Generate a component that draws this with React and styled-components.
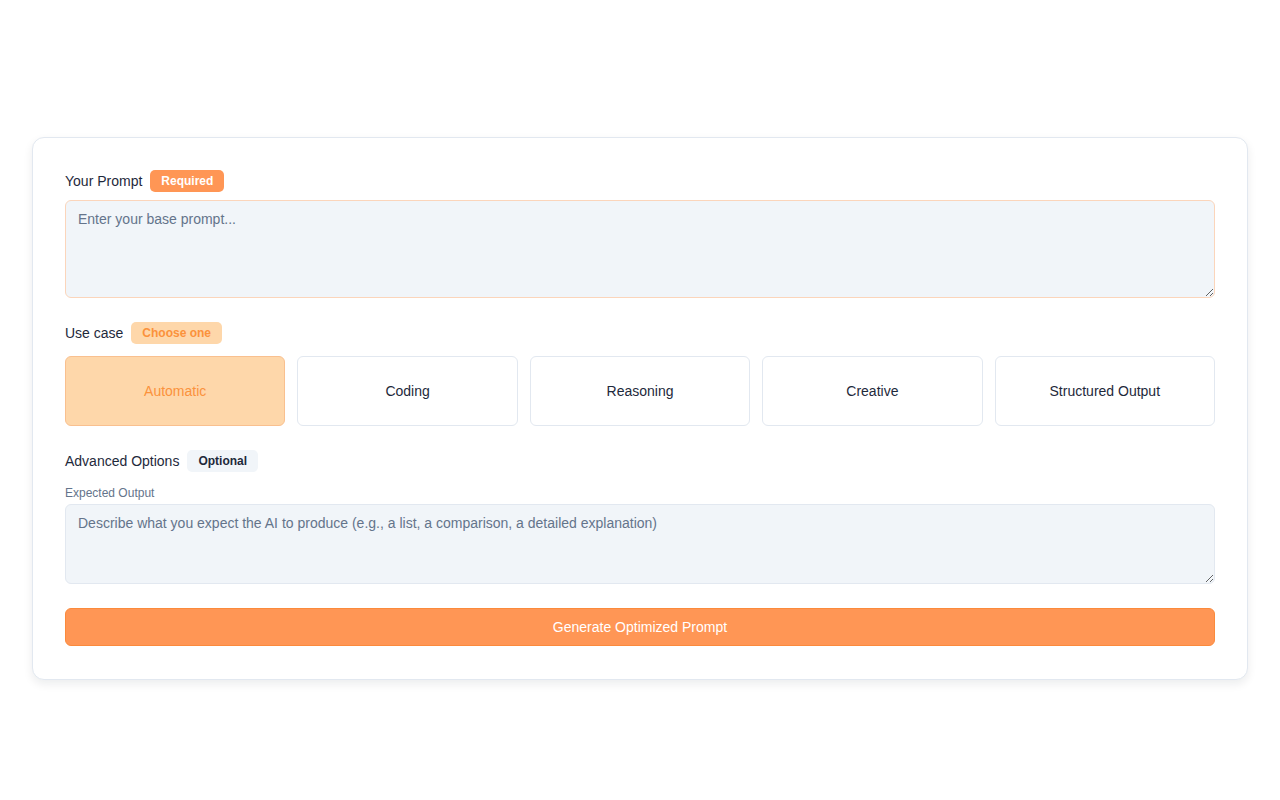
import React, { useState } from "react";
import styled, { createGlobalStyle } from "styled-components";

const GlobalStyle = createGlobalStyle`
  * { box-sizing: border-box; }
  body {
    margin: 0;
    background: #ffffff;
    font-family: "Liberation Sans", Arial, sans-serif;
    color: #1e293b;
  }
`;

const Page = styled.div`
  padding: 137px 32px 120px;
`;

const Card = styled.div`
  background: #ffffff;
  border: 1px solid #e2e8f0;
  border-radius: 12px;
  padding: 32px 32px 33px;
  box-shadow: 0 4px 10px rgba(15, 23, 42, 0.08);
  display: flex;
  flex-direction: column;
  gap: 24px;
`;

const Section = styled.div`
  display: flex;
  flex-direction: column;
  gap: 12px;
`;

const LabelRow = styled.div`
  display: flex;
  align-items: center;
  gap: 8px;
  height: 22px;
  font-size: 14px;
  color: #1e293b;
  margin-bottom: ${(p) => (p.$tight ? "-4px" : "0")};
`;

const Badge = styled.span`
  display: inline-flex;
  align-items: center;
  height: 22px;
  padding: 0 11px;
  border-radius: 5px;
  font-size: 12px;
  font-weight: 700;
  background: ${(p) =>
    p.$tone === "solid" ? "#ff9655" : p.$tone === "soft" ? "#fed7aa" : "#f1f5f9"};
  color: ${(p) =>
    p.$tone === "solid" ? "#ffffff" : p.$tone === "soft" ? "#fb923c" : "#1e293b"};
`;

const TextArea = styled.textarea`
  display: block;
  width: 100%;
  height: ${(p) => p.$h}px;
  padding: 8px 12px;
  border: 1px solid ${(p) => (p.$accent ? "#fbd5bb" : "#e2e8f0")};
  border-radius: 6px;
  background: #f1f5f9;
  font-family: inherit;
  font-size: 14px;
  line-height: 20px;
  color: #1e293b;
  outline: none;
  &::placeholder { color: #64748b; }
`;

const OptionGrid = styled.div`
  display: grid;
  grid-template-columns: repeat(5, 1fr);
  gap: 12px;
`;

const Option = styled.button`
  height: 70px;
  border-radius: 6px;
  border: 1px solid ${(p) => (p.$active ? "#f9c08f" : "#e2e8f0")};
  background: ${(p) => (p.$active ? "#fed7aa" : "#ffffff")};
  color: ${(p) => (p.$active ? "#fb923c" : "#1e293b")};
  font-family: inherit;
  font-size: 14px;
  cursor: pointer;
`;

const FieldLabel = styled.div`
  font-size: 12px;
  color: #64748b;
  margin-top: 2px;
  margin-bottom: -8px;
`;

const Submit = styled.button`
  height: 38px;
  width: 100%;
  border: 1px solid #fb8a3c;
  border-radius: 6px;
  background: #ff9655;
  color: #ffffff;
  font-family: inherit;
  font-size: 14px;
  cursor: pointer;
`;

const options = ["Automatic", "Coding", "Reasoning", "Creative", "Structured Output"];

export default function App() {
  const [active, setActive] = useState("Automatic");
  return (
    <Page>
      <GlobalStyle />
      <Card>
        <Section>
          <LabelRow $tight>
            Your Prompt <Badge $tone="solid">Required</Badge>
          </LabelRow>
          <TextArea $accent $h={98} placeholder="Enter your base prompt..." />
        </Section>
        <Section>
          <LabelRow>
            Use case <Badge $tone="soft">Choose one</Badge>
          </LabelRow>
          <OptionGrid>
            {options.map((o) => (
              <Option key={o} $active={o === active} onClick={() => setActive(o)}>
                {o}
              </Option>
            ))}
          </OptionGrid>
        </Section>
        <Section>
          <LabelRow>
            Advanced Options <Badge>Optional</Badge>
          </LabelRow>
          <FieldLabel>Expected Output</FieldLabel>
          <TextArea
            $h={80}
            placeholder="Describe what you expect the AI to produce (e.g., a list, a comparison, a detailed explanation)"
          />
        </Section>
        <Submit>Generate Optimized Prompt</Submit>
      </Card>
    </Page>
  );
}
